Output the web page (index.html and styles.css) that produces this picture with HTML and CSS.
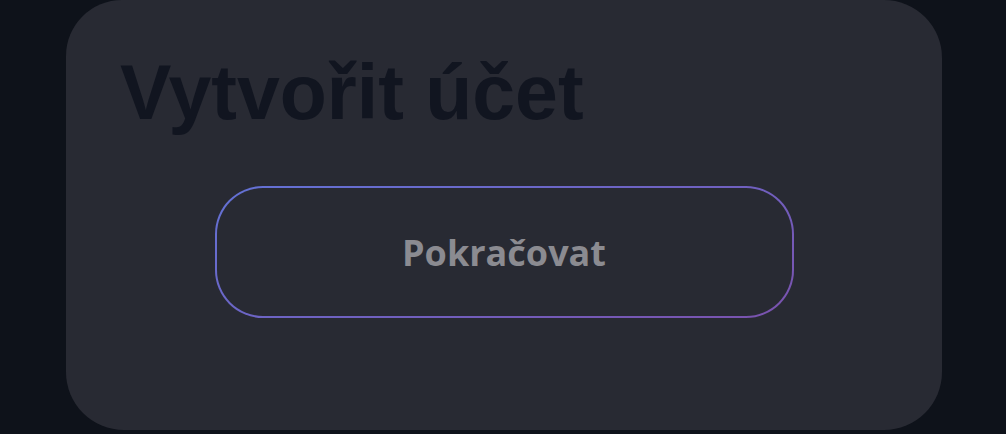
FILE: index.html
```html
<!DOCTYPE html>
<html lang="cs">
  <head>
    <meta charset="UTF-8" />
    <meta name="viewport" content="width=device-width, initial-scale=1.0" />
    <title>Vytvořit účet</title>
    <link rel="stylesheet" href="styles.css">
  </head>
  <body>
    <div class="card">
      <h1>Vytvořit účet</h1>

      <div class="actions">
        <button type="button" class="btn-continue">Pokračovat</button>
      </div>
    </div>
  </body>
</html>
```

FILE: styles.css
```css
body {
  margin: 0;
  padding: 0;
  background-color: #0e121a;
  min-height: 100vh;
}

.card {
  background-color: #282a33;
  margin: 0 64px 0 66px;
  height: 430px;
  border-radius: 56px 58px 58px 58px;
  padding: 0 54px;
  box-sizing: border-box;
  overflow: hidden;
}

h1 {
  font-family: "Liberation Sans", Arial, sans-serif;
  font-weight: bold;
  font-size: 77px;
  line-height: 1;
  color: #111520;
  margin: 0;
  padding-top: 54px;
}

.actions {
  display: flex;
  justify-content: center;
  margin-top: 55px;
}

.btn-continue {
  width: 579px;
  height: 132px;
  border: 2px solid transparent;
  border-radius: 48px;
  background:
    linear-gradient(#282a33, #282a33) padding-box,
    linear-gradient(160deg, #6372d6, #7a52ae) border-box;
  color: #8b8b91;
  font-family: "Open Sans", sans-serif;
  font-weight: bold;
  font-size: 36px;
  cursor: pointer;
}
```
